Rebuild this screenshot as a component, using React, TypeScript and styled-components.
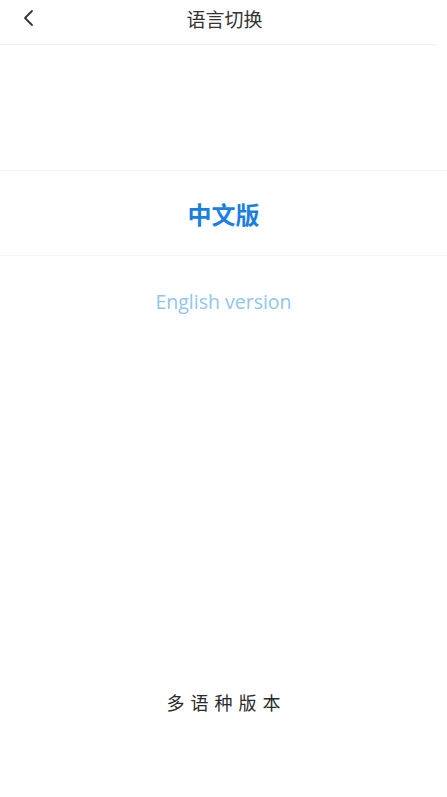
import * as React from "react";
import styled, { createGlobalStyle } from "styled-components";

const GlobalStyle = createGlobalStyle`
  html, body {
    margin: 0;
    padding: 0;
    background: #ffffff;
  }
  body {
    font-family: "Noto Sans CJK SC", "Noto Sans", sans-serif;
  }
`;

export default function App() {
  return (
    <>
      <GlobalStyle />
      <ScPage>
        <ScHeader>
          <ScBack aria-label="back">
            <svg width="12" height="18" viewBox="0 0 12 18">
              <path
                d="M10 2 L3 9 L10 16"
                fill="none"
                stroke="#333"
                strokeWidth="1.8"
                strokeLinecap="round"
                strokeLinejoin="round"
              />
            </svg>
          </ScBack>
          <ScTitle>语言切换</ScTitle>
        </ScHeader>
        <ScList>
          <ScOption $active>中文版</ScOption>
          <ScOption>English version</ScOption>
        </ScList>
        <ScFooter>多语种版本</ScFooter>
      </ScPage>
    </>
  );
}

const ScPage = styled.div`
  height: 797px;
  display: flex;
  flex-direction: column;
  background: #fff;
`;

const ScHeader = styled.div`
  height: 45px;
  margin-right: 10px;
  border-bottom: 1px solid #efefef;
  display: flex;
  align-items: center;
  justify-content: center;
  position: relative;
  box-sizing: border-box;
`;

const ScBack = styled.div`
  position: absolute;
  left: 22px;
  top: 9px;
  display: flex;
`;

const ScTitle = styled.div`
  font-size: 19px;
  color: #333;
  margin-top: -7px;
  margin-left: 12px;
`;

const ScList = styled.div`
  margin-top: 125px;
  display: flex;
  flex-direction: column;
`;

const ScOption = styled.div<{ $active?: boolean }>`
  height: 86px;
  display: flex;
  align-items: center;
  justify-content: center;
  box-sizing: border-box;
  ${(p) =>
    p.$active
      ? `
    border-top: 1px solid #f4f4f4;
    border-bottom: 1px solid #f4f4f4;
    font-size: 24px;
    font-weight: 700;
    color: #1a7fe0;
  `
      : `
    font-family: "Open Sans", "Noto Sans", sans-serif;
    font-size: 19.5px;
    color: #8fc6ec;
    margin-top: 2px;
  `}
`;

const ScFooter = styled.div`
  margin-top: auto;
  margin-bottom: 82px;
  text-align: center;
  font-size: 18px;
  letter-spacing: 6px;
  padding-left: 6px;
  color: #2a2a2a;
  font-family: "Noto Sans CJK SC", sans-serif;
`;
